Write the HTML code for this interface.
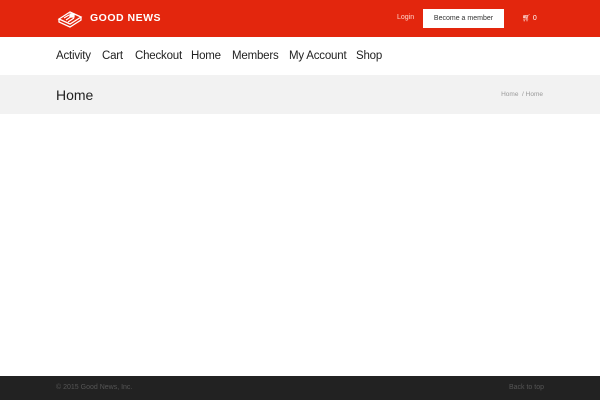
<!DOCTYPE html>
<html><head><style>
*{margin:0;padding:0;box-sizing:border-box}
body{width:600px;height:400px;position:relative;background:#fff;font-family:"Liberation Sans",sans-serif;overflow:hidden}
.top{position:absolute;left:0;top:0;width:600px;height:37px;background:#e3260d}
.logo{position:absolute;left:90px;top:12px;color:#fff;font-size:10.5px;font-weight:bold;letter-spacing:0.5px}
.login{position:absolute;left:397px;top:14px;font-size:7px;color:#ffd6cc}
.btn{position:absolute;left:423px;top:9px;width:81px;height:19px;background:#fff;color:#333;font-size:7px;text-align:center;line-height:19px}
.cart{position:absolute;left:522px;top:14px;color:#fff;font-size:7px}
.nav span{position:absolute;top:50px;font-size:11.5px;letter-spacing:-0.2px;color:#222;white-space:nowrap}
.band{position:absolute;top:75px;left:0;width:600px;height:39px;background:#f2f2f2}
.band h1{position:absolute;left:56px;top:12px;font-size:14px;font-weight:normal;color:#222}
.bc{position:absolute;right:57px;top:16px;font-size:6.5px;color:#999}
.foot{position:absolute;left:0;top:376px;width:600px;height:24px;background:#222}
.foot span{position:absolute;top:8px;font-size:7px;color:#555}
</style></head><body>
<div class="top">
<svg style="position:absolute;left:56px;top:9px" width="28" height="19" viewBox="0 0 28 19" fill="none" stroke="#fff" stroke-width="1.3"><path d="M3 10 L14 3 L25 8 L14 15 Z"/><path d="M3 10 L3 13 L14 18 L25 11 L25 8"/><path d="M8 9 L13 6 M10 11 L16 7 M12 13 L18 9"/><rect x="14" y="5" width="4" height="3" fill="#fff"/></svg>
<div class="logo">GOOD NEWS</div>
<div class="login">Login</div>
<div class="btn">Become a member</div>
<div class="cart">&#x1F6D2;&#xFE0E; 0</div>
</div>
<div class="nav"><span style="left:56px">Activity</span><span style="left:102px">Cart</span><span style="left:135px">Checkout</span><span style="left:191px">Home</span><span style="left:232px">Members</span><span style="left:289px">My Account</span><span style="left:356px">Shop</span></div>
<div class="band"><h1>Home</h1><div class="bc">Home &nbsp;/ Home</div></div>
<div class="foot"><span style="left:56px">© 2015 Good News, Inc.</span><span style="right:56px">Back to top</span></div>
</body></html>
